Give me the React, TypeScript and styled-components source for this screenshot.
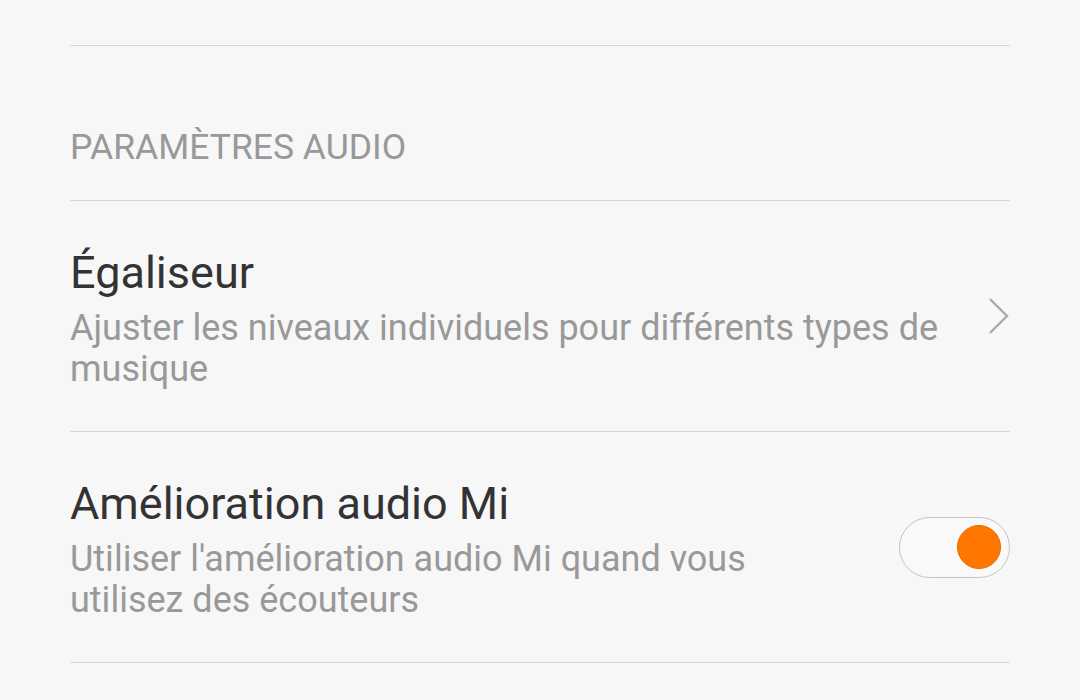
import styled, { createGlobalStyle } from "styled-components";
import { useState } from "react";

const GlobalStyle = createGlobalStyle`
  html, body {
    margin: 0;
    padding: 0;
    background: #f7f7f7;
  }
  body {
    font-family: Roboto, "Noto Sans", sans-serif;
  }
`;

const Page = styled.div({
  padding: "45px 70px 0",
  width: "940px",
});

const Divider = styled.div({
  height: "1px",
  backgroundColor: "#d6d6d6",
});

const SectionHeader = styled.div({
  height: "154px",
  display: "flex",
  alignItems: "flex-end",
});

const SectionTitle = styled.h2({
  margin: "0 0 33px",
  fontSize: "35.5px",
  lineHeight: "40px",
  fontWeight: 400,
  color: "#999999",
});

const Row = styled.div({
  height: "230px",
  display: "flex",
  alignItems: "center",
  justifyContent: "space-between",
  gap: "40px",
});

const RowText = styled.div({
  display: "flex",
  flexDirection: "column",
  flex: 1,
  paddingTop: "4px",
});

const RowTitle = styled.div({
  fontSize: "45px",
  lineHeight: "52px",
  color: "#333333",
});

const RowSubtitle = styled.div<{ $maxWidth?: number }>`
  margin-top: 9px;
  font-size: 36px;
  line-height: 41px;
  color: #999999;
  max-width: ${p => (p.$maxWidth ? `${p.$maxWidth}px` : "none")};
`;

const Chevron = styled.svg({
  width: "22px",
  height: "38px",
  flexShrink: 0,
});

const Toggle = styled.button<{ $on: boolean }>`
  width: 111px;
  height: 61px;
  flex-shrink: 0;
  border-radius: 31px;
  border: 1px solid #c4c4c4;
  background: #f9f9f9;
  cursor: pointer;
  display: flex;
  align-items: center;
  justify-content: ${p => (p.$on ? "flex-end" : "flex-start")};
  padding: 0 8px;
  box-sizing: border-box;
`;

const Knob = styled.span({
  width: "44px",
  height: "44px",
  borderRadius: "50%",
  backgroundColor: "#ff7600",
  border: "1px solid #e56a00",
  boxSizing: "border-box",
});

export default function App() {
  const [enhanced, setEnhanced] = useState(true);

  return (
    <>
      <GlobalStyle />
      <Page>
        <Divider />
        <SectionHeader>
          <SectionTitle>PARAMÈTRES AUDIO</SectionTitle>
        </SectionHeader>
        <Divider />
        <Row>
          <RowText>
            <RowTitle>Égaliseur</RowTitle>
            <RowSubtitle>Ajuster les niveaux individuels pour différents types de musique</RowSubtitle>
          </RowText>
          <Chevron viewBox="0 0 22 38">
            <polyline points="2,2 19,19 2,36" fill="none" stroke="#aaaaaa" strokeWidth="2.4" />
          </Chevron>
        </Row>
        <Divider />
        <Row>
          <RowText>
            <RowTitle>Amélioration audio Mi</RowTitle>
            <RowSubtitle $maxWidth={780}>Utiliser l'amélioration audio Mi quand vous utilisez des écouteurs</RowSubtitle>
          </RowText>
          <Toggle $on={enhanced} onClick={() => setEnhanced(!enhanced)}>
            <Knob />
          </Toggle>
        </Row>
        <Divider />
      </Page>
    </>
  );
}
